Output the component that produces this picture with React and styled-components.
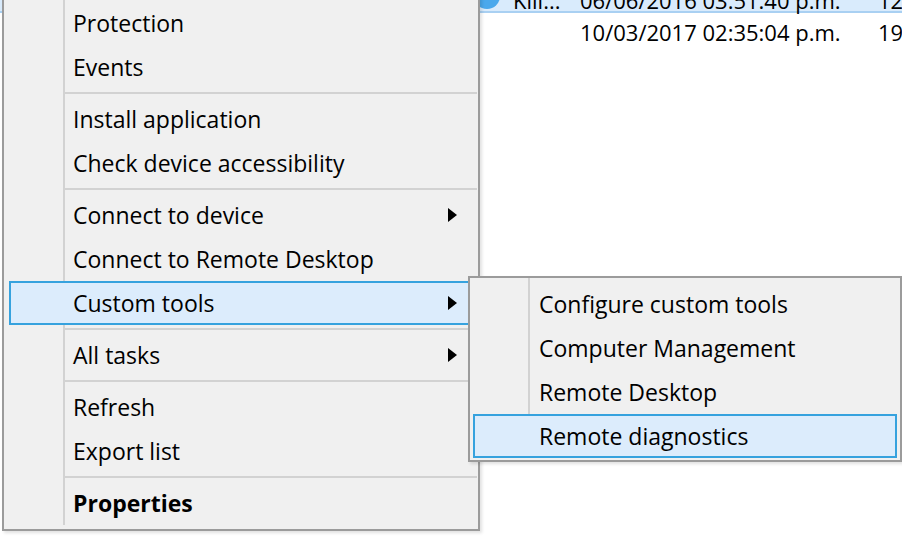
import React from 'react';
import styled, {createGlobalStyle} from 'styled-components';

const GlobalStyle = createGlobalStyle`
  html, body {
    margin: 0;
    padding: 0;
    background: #ffffff;
    overflow: hidden;
  }
  body {
    font-family: "Open Sans", "Noto Sans", "Liberation Sans", sans-serif;
    color: #000000;
  }
`

const rows = [
  {name: 'Kill...', date: '06/06/2016 03:51:40 p.m.', size: '12', selected: true},
  {name: 'Kill...', date: '10/03/2017 02:35:04 p.m.', size: '19'}
]

const mainMenu = [
  [{label: 'Protection'}, {label: 'Events'}],
  [{label: 'Install application'}, {label: 'Check device accessibility'}],
  [{label: 'Connect to device', sub: true}, {label: 'Connect to Remote Desktop'}, {label: 'Custom tools', sub: true, active: true}],
  [{label: 'All tasks', sub: true}],
  [{label: 'Refresh'}, {label: 'Export list'}],
  [{label: 'Properties', bold: true}]
]

const customTools = [
  {label: 'Configure custom tools'},
  {label: 'Computer Management'},
  {label: 'Remote Desktop'},
  {label: 'Remote diagnostics', active: true}
]

const App = () => {
  return (
    <Screen>
      <GlobalStyle />
      <ListView>
        {rows.map((r, i) => (
          <Row key={i} selected={r.selected}>
            <Cell />
            <Cell>{r.selected && <RowIcon />}</Cell>
            <Cell>{i === 0 ? r.name : ''}</Cell>
            <Cell>{r.date}</Cell>
            <Cell>{r.size}</Cell>
          </Row>
        ))}
      </ListView>

      <Menu left={2} top={-5} width={478} padX={5} padBottom={4} gutter={59}>
        {mainMenu.map((group, gi) => (
          <React.Fragment key={gi}>
            {gi > 0 && <Separator />}
            {group.map(item => (
              <Item key={item.label} active={item.active} textLeft={62}>
                <Label bold={item.bold}>{item.label}</Label>
                {item.sub && <Arrow />}
              </Item>
            ))}
          </React.Fragment>
        ))}
      </Menu>

      <Menu left={468} top={276} width={434} padX={3} padBottom={2} gutter={58}>
        {customTools.map(item => (
          <Item key={item.label} active={item.active} textLeft={64}>
            <Label>{item.label}</Label>
          </Item>
        ))}
      </Menu>
    </Screen>
  )
}

export default App;

const Screen = styled.div`
  position: relative;
  width: 902px;
  height: 536px;
  overflow: hidden;
  background: #ffffff;
`

const ListView = styled.section`
  margin-top: -19px;
  display: flex;
  flex-direction: column;
`

const Row = styled.div`
  height: 32px;
  box-sizing: border-box;
  padding-top: 7px;

  display: grid;
  grid-template-columns: 470px 43px 67px 298px 1fr;
  align-items: center;

  background: ${p => p.selected ? '#d9ebfc' : 'transparent'};
  border-bottom: 2px solid ${p => p.selected ? '#a9d0f2' : 'transparent'};

  font-size: 22px;
  white-space: nowrap;
`

const Cell = styled.div`
  overflow: hidden;
`

const RowIcon = styled.div`
  width: 26px;
  height: 26px;
  margin-top: -8px;
  margin-left: 4px;
  border-radius: 50%;
  background: #4aa8ec;
`

const Menu = styled.nav`
  position: absolute;
  left: ${p => p.left}px;
  top: ${p => p.top}px;
  width: ${p => p.width}px;
  box-sizing: border-box;

  display: flex;
  flex-direction: column;

  padding: 4px ${p => p.padX}px ${p => p.padBottom}px;
  border: 2px solid #9b9b9b;
  background-color: #f0f0f0;
  background-image: linear-gradient(
    to right,
    transparent ${p => p.gutter}px,
    #d2d2d2 ${p => p.gutter}px,
    #d2d2d2 ${p => p.gutter + 2}px,
    transparent ${p => p.gutter + 2}px
  );
  background-repeat: no-repeat;
  background-size: 100% calc(100% - ${p => p.padBottom}px);
  box-shadow: 2px 2px 3px rgba(0, 0, 0, 0.12);
`

const Item = styled.div`
  position: relative;
  height: 44px;
  box-sizing: border-box;

  display: flex;
  align-items: center;
  justify-content: space-between;

  padding-left: ${p => p.textLeft}px;
  padding-right: 14px;

  border: 2px solid ${p => p.active ? '#36a2de' : 'transparent'};
  background: ${p => p.active ? '#dcecfc' : 'transparent'};

  font-size: 23px;
  white-space: nowrap;
`

const Label = styled.span`
  margin-top: -1px;
  font-weight: ${p => p.bold ? 700 : 400};
`

const Arrow = styled.span`
  width: 0;
  height: 0;
  border-left: 9px solid #000000;
  border-top: 7px solid transparent;
  border-bottom: 7px solid transparent;
`

const Separator = styled.div`
  height: 8px;
  margin-left: 55px;
  margin-right: -4px;

  display: flex;
  align-items: center;

  &::after {
    content: '';
    flex: 1;
    height: 2px;
    background: #d2d2d2;
  }
`
